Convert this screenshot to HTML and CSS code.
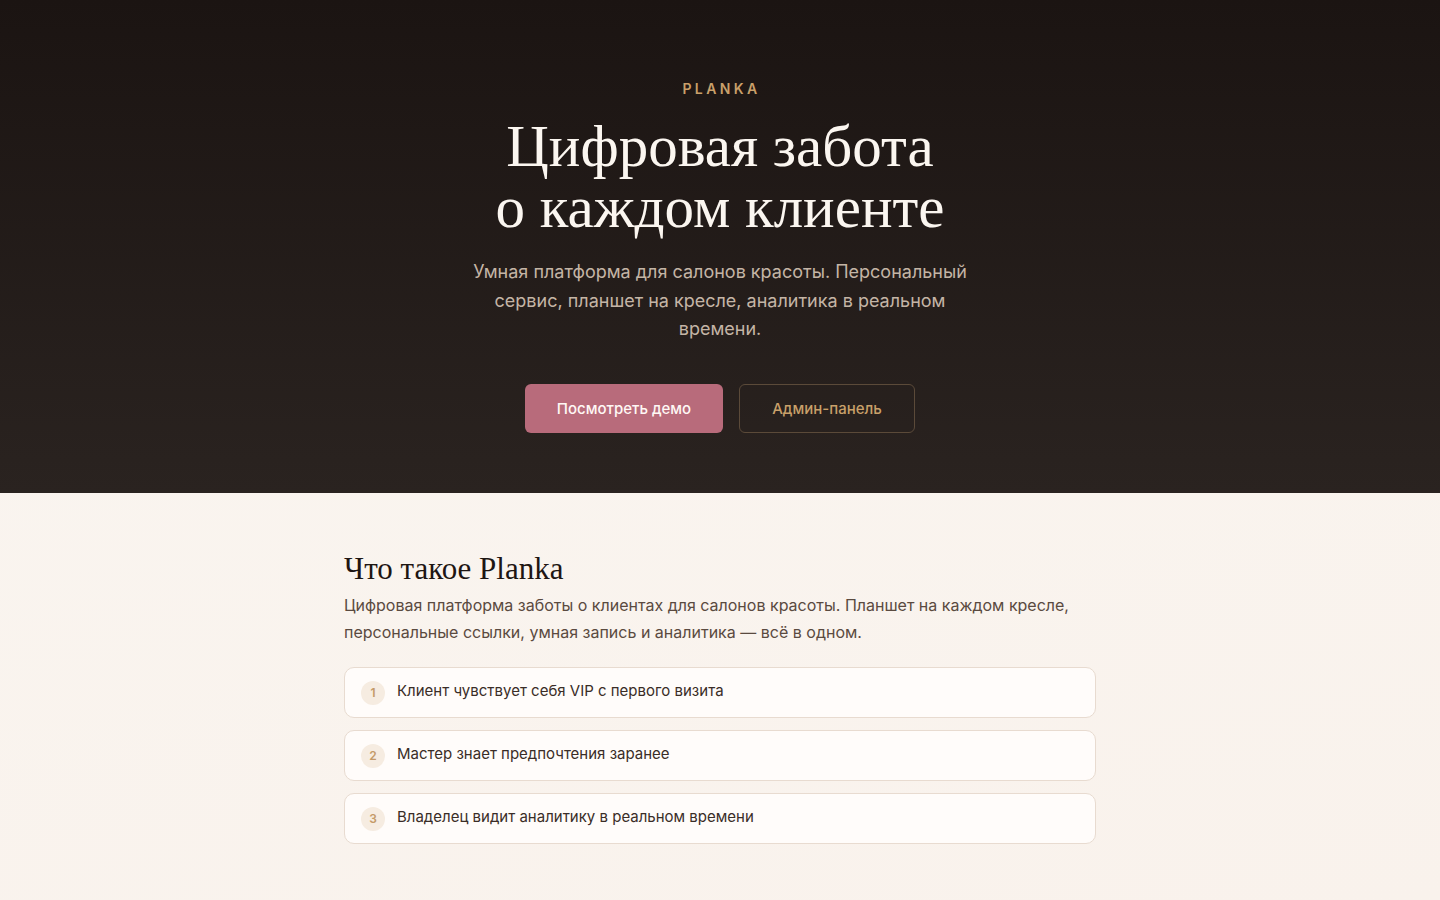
FILE: index.html
```html
<!DOCTYPE html>
<html lang="ru">
<head>
<meta charset="utf-8">
<title>Planka</title>
<link rel="stylesheet" href="styles.css">
</head>
<body>
<header class="hero">
  <div class="brand">PLANKA</div>
  <h1 class="hero-title">Цифровая забота<br>о каждом клиенте</h1>
  <p class="hero-sub">Умная платформа для салонов красоты. Персональный сервис, планшет на кресле, аналитика в реальном времени.</p>
  <div class="actions">
    <a class="btn btn-primary" href="#">Посмотреть демо</a>
    <a class="btn btn-outline" href="#">Админ-панель</a>
  </div>
</header>
<main class="about">
  <div class="container">
    <h2 class="about-title">Что такое Planka</h2>
    <p class="about-text">Цифровая платформа заботы о клиентах для салонов красоты. Планшет на каждом кресле, персональные ссылки, умная запись и аналитика — всё в одном.</p>
    <ul class="points">
      <li class="point"><span class="num">1</span><span class="point-text">Клиент чувствует себя VIP с первого визита</span></li>
      <li class="point"><span class="num">2</span><span class="point-text">Мастер знает предпочтения заранее</span></li>
      <li class="point"><span class="num">3</span><span class="point-text">Владелец видит аналитику в реальном времени</span></li>
    </ul>
  </div>
</main>
</body>
</html>
```
FILE: styles.css
```css
* { box-sizing: border-box; }
html, body { margin: 0; padding: 0; }
body {
  font-family: Inter, "Noto Sans", sans-serif;
  background: linear-gradient(170deg, #faf6f1 0%, #f9f2ec 100%);
  min-height: 900px;
}
.hero {
  height: 493px;
  background: linear-gradient(180deg, #1b1412 0%, #2a2320 100%);
  display: flex;
  flex-direction: column;
  align-items: center;
  padding-top: 80px;
  text-align: center;
}
.brand {
  color: #c9a06a;
  font-size: 14px;
  font-weight: 600;
  letter-spacing: 3.4px;
  line-height: 17px;
  padding-left: 3px;
}
.hero-title {
  margin: 19px 0 0;
  font-family: "Liberation Serif", "DejaVu Serif", serif;
  font-weight: 400;
  font-size: 59px;
  line-height: 61px;
  color: #fbf6f0;
}
.hero-sub {
  margin: 20px 0 0;
  width: 500px;
  font-size: 18px;
  line-height: 28.5px;
  color: #c4b5a6;
}
.actions {
  display: flex;
  gap: 16px;
  margin-top: 40px;
}
.btn {
  display: flex;
  align-items: center;
  justify-content: center;
  height: 49px;
  border-radius: 6px;
  font-size: 15px;
  font-weight: 500;
  text-decoration: none;
}
.btn-primary {
  width: 198px;
  background: #b86b7b;
  color: #fff8f5;
}
.btn-outline {
  width: 176px;
  border: 1px solid #5b4a39;
  color: #c9a06a;
}
.about { padding-top: 57px; }
.container { width: 752px; margin: 0 auto; }
.about-title {
  margin: 0;
  font-family: "Liberation Serif", "DejaVu Serif", serif;
  font-weight: 400;
  font-size: 31px;
  line-height: 38px;
  color: #1e1613;
}
.about-text {
  margin: 4px 0 0;
  font-size: 16px;
  line-height: 27px;
  color: #5a4a40;
}
.points {
  list-style: none;
  margin: 21px 0 0;
  padding: 0;
  display: flex;
  flex-direction: column;
  gap: 12px;
}
.point {
  display: flex;
  align-items: center;
  height: 51px;
  padding: 0 16px;
  background: #fffcfa;
  border: 1px solid #e8dbd0;
  border-radius: 10px;
}
.num {
  width: 24px;
  height: 24px;
  border-radius: 50%;
  background: #f6ece1;
  color: #c49a68;
  font-size: 12px;
  font-weight: 600;
  display: flex;
  align-items: center;
  justify-content: center;
  flex-shrink: 0;
}
.point-text {
  margin-left: 12px;
  font-size: 15px;
  color: #3a2d27;
  margin-top: -5px;
}
```
